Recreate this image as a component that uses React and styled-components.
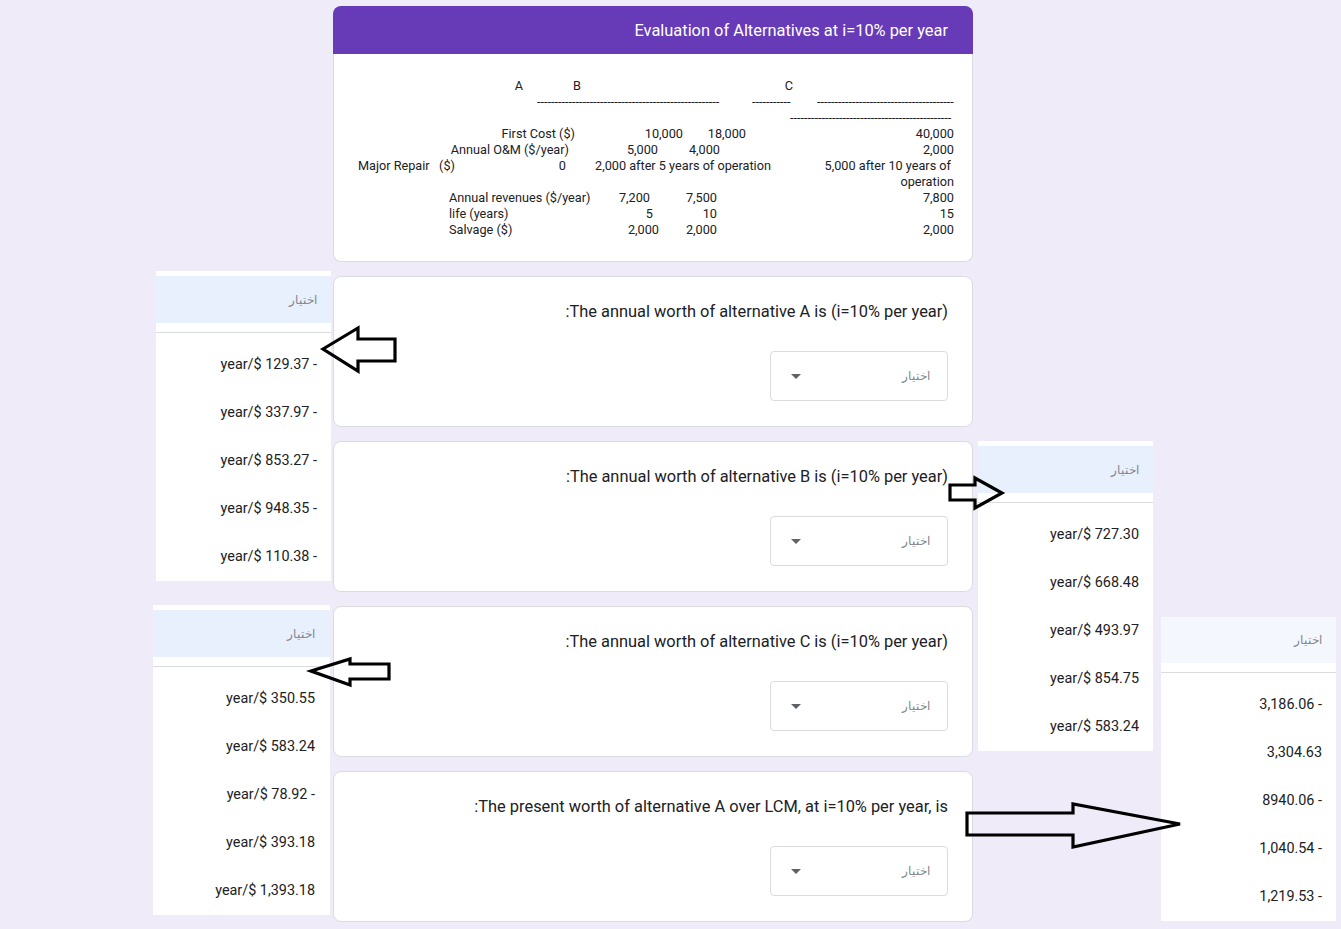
import styled, { createGlobalStyle } from "styled-components";

const GlobalStyle = createGlobalStyle`
  body {
    margin: 0;
    background: #f0ebf8;
    font-family: Roboto, "Liberation Sans", Arial, sans-serif;
    color: #202124;
  }
`;

const Page = styled.div`
  position: relative;
  min-height: 929px;
  overflow: hidden;
`;

const Column = styled.div`
  display: flex;
  flex-direction: column;
  gap: 14px;
  width: 640px;
  margin-left: 333px;
  padding-top: 6px;
`;

const HeaderCard = styled.div`
  display: flex;
  flex-direction: column;
`;

const Banner = styled.div`
  height: 48px;
  background: #673ab7;
  border-radius: 8px 8px 0 0;
  color: #fff;
  font-size: 16.4px;
  display: flex;
  align-items: center;
  justify-content: flex-end;
  padding-right: 25px;
`;

const TableBody = styled.div`
  background: #fff;
  border: 1px solid #dadce0;
  border-top: none;
  border-radius: 0 0 8px 8px;
  padding: 24px 0 23px;
  font-size: 12.7px;
`;

const TRow = styled.div`
  display: flex;
  height: 16px;
  line-height: 16px;
`;

const TCell = styled.div`
  flex: none;
  margin-left: ${(p) => p.$ml}px;
  width: ${(p) => p.$w}px;
  text-align: ${(p) => p.$align || "left"};
  white-space: pre;
  overflow: hidden;
`;

const QuestionCard = styled.div`
  background: #fff;
  border: 1px solid #dadce0;
  border-radius: 8px;
  padding: 23px 24px 25px;
  display: flex;
  flex-direction: column;
  align-items: flex-end;
  gap: 27px;
`;

const QuestionTitle = styled.div`
  font-size: 16.4px;
  line-height: 24px;
  color: #202124;
`;

const Select = styled.div`
  box-sizing: border-box;
  width: 178px;
  height: 50px;
  border: 1px solid #dadce0;
  border-radius: 4px;
  display: flex;
  align-items: center;
  justify-content: space-between;
  padding: 0 17px 0 20px;
`;

const Caret = styled.span`
  width: 0;
  height: 0;
  border-left: 5px solid transparent;
  border-right: 5px solid transparent;
  border-top: 5px solid #5f6368;
`;

const Placeholder = styled.span`
  font-size: 12px;
  color: #80868b;
`;

const Panel = styled.div`
  position: absolute;
  left: ${(p) => p.$x}px;
  top: ${(p) => p.$y}px;
  width: ${(p) => p.$w}px;
  background: #fff;
  padding-top: ${(p) => p.$top}px;
`;

const PanelHeader = styled.div`
  height: ${(p) => p.$h}px;
  background: ${(p) => p.$bg};
  display: flex;
  align-items: center;
  justify-content: flex-end;
  padding-right: ${(p) => p.$pr}px;
  font-size: 12px;
  color: #80868b;
`;

const Divider = styled.div`
  height: 1px;
  background: #dadce0;
  margin: 9px 0 8px;
`;

const Option = styled.div`
  height: 48px;
  line-height: 48px;
  text-align: right;
  padding-right: ${(p) => p.$pr}px;
  font-size: 14.4px;
  color: #202124;
`;

const ArrowSvg = styled.svg`
  position: absolute;
  left: ${(p) => p.$x}px;
  top: ${(p) => p.$y}px;
  overflow: visible;
`;

// hyphen run that fits a span of w pixels
const dash = (w) => "-".repeat(Math.floor(w / 3.5));
const L = 334;

const TABLE = [
  [[511, 527, "A", "center"], [569, 585, "B", "center"], [781, 797, "C", "center"]],
  [[537, 722, dash(185)], [752, 791, dash(39)], [817, 954, dash(137)]],
  [[790, 954, dash(164)]],
  [[334, 575, "First Cost ($)", "right"], [600, 683, "10,000", "right"], [690, 746, "18,000", "right"], [800, 954, "40,000", "right"]],
  [[334, 569, "Annual O&M ($/year)", "right"], [600, 658, "5,000", "right"], [660, 720, "4,000", "right"], [800, 954, "2,000", "right"]],
  [[358, 470, "Major Repair   ($)"], [480, 566, "0", "right"], [595, 785, "2,000 after 5 years of operation"], [800, 951, "5,000 after 10 years of", "right"]],
  [[800, 954, "operation", "right"]],
  [[449, 600, "Annual revenues ($/year)"], [600, 650, "7,200", "right"], [660, 717, "7,500", "right"], [800, 954, "7,800", "right"]],
  [[449, 600, "life (years)"], [600, 653, "5", "right"], [660, 717, "10", "right"], [800, 954, "15", "right"]],
  [[449, 600, "Salvage ($)"], [600, 659, "2,000", "right"], [665, 717, "2,000", "right"], [800, 954, "2,000", "right"]],
];

const QUESTIONS = [
  ":The annual worth of alternative A is (i=10% per year)",
  ":The annual worth of alternative B is (i=10% per year)",
  ":The annual worth of alternative C is (i=10% per year)",
  ":The present worth of alternative A over LCM, at i=10% per year, is",
];

const PANELS = [
  { x: 156, y: 271, w: 175, top: 5, h: 47, bg: "#e8f0fe", pr: 14,
    items: ["year/$ 129.37 -", "year/$ 337.97 -", "year/$ 853.27 -", "year/$ 948.35 -", "year/$ 110.38 -"] },
  { x: 978, y: 441, w: 175, top: 5, h: 47, bg: "#e8f0fe", pr: 14,
    items: ["year/$ 727.30", "year/$ 668.48", "year/$ 493.97", "year/$ 854.75", "year/$ 583.24"] },
  { x: 153, y: 605, w: 177, top: 5, h: 47, bg: "#e8f0fe", pr: 15,
    items: ["year/$ 350.55", "year/$ 583.24", "year/$ 78.92 -", "year/$ 393.18", "year/$ 1,393.18"] },
  { x: 1161, y: 617, w: 175, top: 0, h: 46, bg: "#f4f7fe", pr: 14,
    items: ["3,186.06 -", "3,304.63", "8940.06 -", "1,040.54 -", "1,219.53 -"] },
];

const ARROWS = [
  [[323, 349], [358, 328], [358, 339], [395, 339], [395, 361], [358, 361], [358, 371]],
  [[950, 485], [975, 485], [975, 478], [1002, 493], [975, 508], [975, 500], [950, 500]],
  [[311, 671], [350, 659], [350, 664], [389, 664], [389, 679], [350, 679], [350, 685]],
  [[967, 813], [1073, 813], [1073, 804], [1180, 824], [1073, 847], [1073, 835], [967, 835]],
];

function Arrow({ points }) {
  const xs = points.map((p) => p[0]);
  const ys = points.map((p) => p[1]);
  const x0 = Math.min(...xs) - 3;
  const y0 = Math.min(...ys) - 3;
  const w = Math.max(...xs) - x0 + 3;
  const h = Math.max(...ys) - y0 + 3;
  const pts = points.map(([x, y]) => `${x - x0},${y - y0}`).join(" ");
  return (
    <ArrowSvg $x={x0} $y={y0} width={w} height={h} viewBox={`0 0 ${w} ${h}`}>
      <polygon points={pts} fill="none" stroke="#000" strokeWidth="3.2" strokeLinejoin="miter" />
    </ArrowSvg>
  );
}

function TableRow({ cells }) {
  let prev = L;
  return (
    <TRow>
      {cells.map(([l, r, t, a], i) => {
        const ml = l - prev;
        prev = r;
        return (
          <TCell key={i} $ml={ml} $w={r - l} $align={a}>
            {t}
          </TCell>
        );
      })}
    </TRow>
  );
}

export default function App() {
  return (
    <Page>
      <GlobalStyle />
      <Column>
        <HeaderCard>
          <Banner>Evaluation of Alternatives at i=10% per year</Banner>
          <TableBody>
            {TABLE.map((cells, i) => (
              <TableRow key={i} cells={cells} />
            ))}
          </TableBody>
        </HeaderCard>
        {QUESTIONS.map((q) => (
          <QuestionCard key={q}>
            <QuestionTitle>{q}</QuestionTitle>
            <Select>
              <Caret />
              <Placeholder>اختيار</Placeholder>
            </Select>
          </QuestionCard>
        ))}
      </Column>

      {PANELS.map((p, i) => (
        <Panel key={i} $x={p.x} $y={p.y} $w={p.w} $top={p.top}>
          <PanelHeader $h={p.h} $bg={p.bg} $pr={p.pr}>اختيار</PanelHeader>
          <Divider />
          {p.items.map((it, j) => (
            <Option key={j} $pr={p.pr}>{it}</Option>
          ))}
        </Panel>
      ))}

      {ARROWS.map((a, i) => (
        <Arrow key={i} points={a} />
      ))}
    </Page>
  );
}
